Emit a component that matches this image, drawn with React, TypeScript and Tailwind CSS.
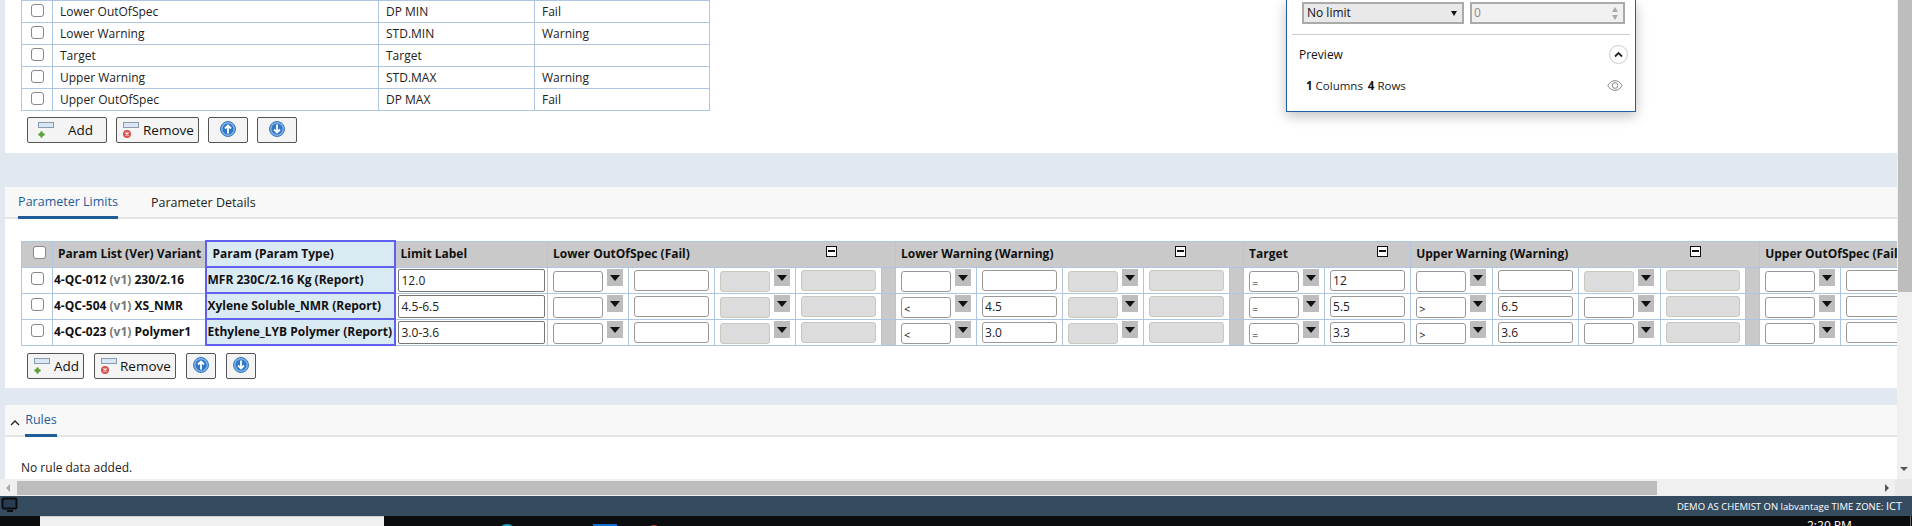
import React from "react";

function Bar() {
  return <rect x="0.5" y="0.5" width="15" height="5" fill="#dbe6f4" stroke="#8a9bb0" />;
}
function AddIcon() {
  return (
    <svg width="16" height="16" viewBox="0 0 16 16" className="shrink-0">
      <Bar />
      <path d="M3.500 9.500v6M0.500 12.500h6" stroke="#5a9e3a" strokeWidth="2.400" />
    </svg>
  );
}
function RemoveIcon() {
  return (
    <svg width="16" height="16" viewBox="0 0 16 16" className="shrink-0">
      <Bar />
      <circle cx="4" cy="12" r="4" fill="#d9534f" />
      <path d="M2.500 10.500l3 3M5.500 10.500l-3 3" stroke="#fff" strokeWidth="1.200" />
    </svg>
  );
}
function ArrowIcon({ up }: { up?: boolean }) {
  return (
    <svg width="16" height="16" viewBox="0 0 16 16" className="mb-[3px]">
      <circle cx="8" cy="8" r="7.500" fill="#7fb0e6" stroke="#3a78bd" />
      <circle cx="8" cy="8" r="5.500" fill="#2f78c9" />
      <path d={up ? "M8 12.500V4.500M5 7.500l3-3 3 3" : "M8 3.500v8M5 8.500l3 3 3-3"} stroke="#fff" strokeWidth="1.800" fill="none" />
    </svg>
  );
}

function Buttons({ top }: { top?: boolean }) {
  const base = "h-[26px] border border-[#555] rounded-[2px] bg-[#f4f4f4] flex items-center text-[13.500px] text-[#111]";
  const arrow = top ? "w-[40px] justify-center" : "w-[30px] justify-center";
  return (
    <div className={`flex ${top ? "gap-[9px]" : "gap-[10px]"}`}>
      <div className={`${base} ${top ? "w-[80px] pl-[10px] gap-[14px]" : "w-[57px] pl-[6px] gap-[4px]"}`}>
        <AddIcon />
        <span>Add</span>
      </div>
      <div className={`${base} ${top ? "w-[83px] pl-[6px] gap-[4px]" : "w-[82px] pl-[6px] gap-[3px]"}`}>
        <RemoveIcon />
        <span>Remove</span>
      </div>
      <div className={`${base} ${arrow}`}><ArrowIcon up /></div>
      <div className={`${base} ${arrow}`}><ArrowIcon /></div>
    </div>
  );
}

const topRows = [
  ["Lower OutOfSpec", "DP MIN", "Fail"],
  ["Lower Warning", "STD.MIN", "Warning"],
  ["Target", "Target", ""],
  ["Upper Warning", "STD.MAX", "Warning"],
  ["Upper OutOfSpec", "DP MAX", "Fail"],
];

function Check() {
  return <div className="w-[13px] h-[13px] border border-[#888] rounded-[3px] bg-white mx-auto mb-[3px]" />;
}

function Sel({ v, off }: { v?: string; off?: boolean }) {
  return (
    <div className="flex items-start h-[25px] pl-[5px]">
      <div className={`w-[50px] h-[21px] mt-[3px] shrink-0 border rounded-[3px] text-[11px] leading-[21px] pl-[2px] text-[#111] ${off ? "bg-[#dcdcdc] border-[#c8c8c0]" : "bg-white border-[#999]"}`}>{v}</div>
      <div className="w-[16px] h-[17px] mt-[1px] ml-[4px] shrink-0 bg-[#bdbdbd] flex justify-center pt-[6px]">
        <div className="w-0 h-0 border-l-[5px] border-r-[5px] border-t-[6px] border-l-transparent border-r-transparent border-t-[#111]" />
      </div>
    </div>
  );
}
function Inp({ v, off }: { v?: string; off?: boolean }) {
  return (
    <div className="px-[5px]">
      <div className={`h-[21px] border rounded-[3px] text-[12px] leading-[20px] px-[2px] text-[#222] ${off ? "bg-[#dcdcdc] border-[#c8c8c0]" : "bg-white border-[#999]"}`}>{v}</div>
    </div>
  );
}

type Row = {
  list: string; ver: string; variant: string; param: string; label: string;
  lw: [string, string]; t: [string, string]; uw: [string, string]; uwOff: boolean;
};
const rows: Row[] = [
  { list: "4-QC-012", ver: "(v1)", variant: "230/2.16", param: "MFR 230C/2.16 Kg (Report)", label: "12.0", lw: ["", ""], t: ["=", "12"], uw: ["", ""], uwOff: true },
  { list: "4-QC-504", ver: "(v1)", variant: "XS_NMR", param: "Xylene Soluble_NMR (Report)", label: "4.5-6.5", lw: ["<", "4.5"], t: ["=", "5.5"], uw: [">", "6.5"], uwOff: false },
  { list: "4-QC-023", ver: "(v1)", variant: "Polymer1", param: "Ethylene_LYB Polymer (Report)", label: "3.0-3.6", lw: ["<", "3.0"], t: ["=", "3.3"], uw: [">", "3.6"], uwOff: false },
];

const cell = "border border-[#aec6e4] p-0";
const hcell = "border border-[#aec6e4] p-0 pl-[5px] text-left align-middle font-bold text-[12px] text-[#111] relative whitespace-nowrap overflow-hidden";
const gapCell = "bg-[#c9c9c9] border-y border-[#aec6e4] p-0";
const hi = "!border-2 !border-[#6060f0] bg-[#daeaf3]";

function Minus({ right }: { right: string }) {
  return (
    <div className={`absolute ${right} top-[4px] w-[11px] h-[11px] border border-[#111] bg-white flex items-center justify-center`}>
      <div className="w-[7px] h-[2px] bg-[#111]" />
    </div>
  );
}

export default function App() {
  return (
    <div className="h-[526px] w-[1912px] overflow-hidden flex flex-col bg-[#e2e8f0] text-[12px] text-[#222]" style={{ fontFamily: '"Open Sans", "Noto Sans", sans-serif' }}>
      <div className="flex h-[479px] shrink-0">
        <div className="w-[1897px] shrink-0 pl-[5px] flex flex-col relative overflow-hidden">
          {/* top panel */}
          <div className="h-[153px] shrink-0 bg-white pl-[16px]">
            <table className="table-fixed border-collapse w-[689px]">
              <colgroup><col className="w-[31px]" /><col className="w-[326px]" /><col className="w-[156px]" /><col /></colgroup>
              <tbody>
                {topRows.map((r) => (
                  <tr key={r[0]} className="h-[22px]">
                    <td className={cell}><Check /></td>
                    <td className={`${cell} pl-[7px]`}>{r[0]}</td>
                    <td className={`${cell} pl-[7px]`}>{r[1]}</td>
                    <td className={`${cell} pl-[7px]`}>{r[2]}</td>
                  </tr>
                ))}
              </tbody>
            </table>
            <div className="ml-[6px] mt-[6px]"><Buttons top /></div>
          </div>
          {/* popup */}
          <div className="absolute left-[1286px] top-0 w-[350px] h-[112px] bg-white border border-t-0 border-[#1f5fa8] shadow-[0_4px_12px_rgba(0,0,0,0.25)] text-[#222]">
            <div className="flex gap-[6px] ml-[15px] mt-[2px]">
              <div className="w-[162px] h-[22px] border-2 border-[#aaa] bg-[#e9e9e9] flex items-center justify-between pl-[3px] pr-[5px] text-[#111]">
                <span>No limit</span>
                <div className="w-0 h-0 border-l-[3.500px] border-r-[3.500px] border-t-[5px] border-l-transparent border-r-transparent border-t-[#111]" />
              </div>
              <div className="w-[155px] h-[22px] border-2 border-[#aaa] bg-[#f0f0f0] flex items-center justify-between pl-[2px] pr-[5px] text-[#888]">
                <span>0</span>
                <div className="flex flex-col gap-[3px]">
                  <div className="w-0 h-0 border-l-[3.500px] border-r-[3.500px] border-b-[5px] border-l-transparent border-r-transparent border-b-[#aaa]" />
                  <div className="w-0 h-0 border-l-[3.500px] border-r-[3.500px] border-t-[5px] border-l-transparent border-r-transparent border-t-[#aaa]" />
                </div>
              </div>
            </div>
            <div className="h-px bg-[#ccc] mx-[5px] mt-[10px]" />
            <div className="flex items-center justify-between pl-[12px] pr-[7px] mt-[10px] h-[19px]">
              <span className="text-[#111]">Preview</span>
              <div className="w-[19px] h-[19px] rounded-full border border-[#ccc] flex items-center justify-center">
                <svg width="9" height="7" viewBox="0 0 9 7"><path d="M1 5.500l3.500-3.500L8 5.500" stroke="#222" strokeWidth="1.800" fill="none" /></svg>
              </div>
            </div>
            <div className="flex items-center justify-between pl-[19px] pr-[12px] mt-[13px] text-[11.500px]">
              <span><b className="text-[#111]">1</b> Columns <b className="ml-[2px] text-[#111]">4</b> Rows</span>
              <svg width="16" height="11" viewBox="0 0 16 11" fill="none" stroke="#888"><path d="M.8 5.500C3 2 5.300.7 8 .7s5 1.300 7.200 4.800C13 9 10.700 10.300 8 10.300S3 9 .8 5.500z" /><circle cx="8" cy="5.500" r="2.800" /></svg>
            </div>
          </div>
          {/* gap */}
          <div className="h-[34px] shrink-0" />
          {/* params panel */}
          <div className="h-[201px] shrink-0 bg-white overflow-hidden">
            <div className="h-[32px] bg-[#f8f8f8] border-b-2 border-[#e5e5e5] flex text-[12.500px] pl-[13px]">
              <div className="w-[100px] h-[32px] border-b-[3px] border-[#1f5c99] text-[#1f5c99] pt-[6px] text-center whitespace-nowrap">Parameter Limits</div>
              <div className="ml-[33px] pt-[7px] text-[#222] whitespace-nowrap">Parameter Details</div>
            </div>
            <table className="table-fixed border-collapse w-[1905px] mt-[21px] ml-[16px]">
              <colgroup>
                {[31,153,189,153,81,86,81,86,14,81,86,81,86,14,81,86,82,86,82,85,14,81,86].map((w, i) => <col key={i} style={{ width: w }} />)}
              </colgroup>
              <thead>
                <tr className="h-[26px] bg-[#c9c9c9]">
                  <th className={hcell}><Check /></th>
                  <th className={hcell}>Param List (Ver) Variant</th>
                  <th className={`${hcell} ${hi} !pl-[6px]`}>Param (Param Type)</th>
                  <th className={hcell}>Limit Label</th>
                  <th className={hcell} colSpan={5}>Lower OutOfSpec (Fail)<Minus right="right-[58px]" /></th>
                  <th className={hcell} colSpan={5}>Lower Warning (Warning)<Minus right="right-[57px]" /></th>
                  <th className={hcell} colSpan={2}>Target<Minus right="right-[22px]" /></th>
                  <th className={hcell} colSpan={5}>Upper Warning (Warning)<Minus right="right-[58px]" /></th>
                  <th className={hcell} colSpan={2}>Upper OutOfSpec (Fail)</th>
                </tr>
              </thead>
              <tbody>
                {rows.map((r) => (
                  <tr key={r.list} className="h-[26px]">
                    <td className={cell}><Check /></td>
                    <td className={`${cell} pl-[1px] font-bold text-[#111] whitespace-nowrap`}>{r.list} <span className="text-[#777]">{r.ver}</span> {r.variant}</td>
                    <td className={`${cell} ${hi} pl-[1px] font-bold text-[#111] whitespace-nowrap`}>{r.param}</td>
                    <td className={cell}><div className="px-[2px]"><div className="h-[23px] border border-[#777] rounded-[2px] bg-white pl-[3px] leading-[21px]">{r.label}</div></div></td>
                    <td className={cell}><Sel /></td>
                    <td className={cell}><Inp /></td>
                    <td className={cell}><Sel off /></td>
                    <td className={cell}><Inp off /></td>
                    <td className={gapCell}></td>
                    <td className={cell}><Sel v={r.lw[0]} /></td>
                    <td className={cell}><Inp v={r.lw[1]} /></td>
                    <td className={cell}><Sel off /></td>
                    <td className={cell}><Inp off /></td>
                    <td className={gapCell}></td>
                    <td className={cell}><Sel v={r.t[0]} /></td>
                    <td className={cell}><Inp v={r.t[1]} /></td>
                    <td className={cell}><Sel v={r.uw[0]} /></td>
                    <td className={cell}><Inp v={r.uw[1]} /></td>
                    <td className={cell}><Sel off={r.uwOff} /></td>
                    <td className={cell}><Inp off /></td>
                    <td className={gapCell}></td>
                    <td className={cell}><Sel /></td>
                    <td className={cell}><Inp /></td>
                  </tr>
                ))}
              </tbody>
            </table>
            <div className="ml-[22px] mt-[7px]"><Buttons /></div>
          </div>
          {/* gap */}
          <div className="h-[17px] shrink-0" />
          {/* rules */}
          <div className="h-[74px] shrink-0 bg-white">
            <div className="h-[32px] bg-[#f8f8f8] border-b-2 border-[#e5e5e5] flex pl-[5px]">
              <svg width="10" height="7" viewBox="0 0 10 7" className="mt-[14px] mr-[5px]"><path d="M1 6l4-4 4 4" stroke="#222" strokeWidth="1.300" fill="none" /></svg>
              <div className="h-[32px] w-[32px] border-b-[3px] border-[#1f5c99] text-[#1f5c99] pt-[6px] text-center text-[12.500px]">Rules</div>
            </div>
            <div className="pl-[16px] pt-[22px] text-[#222]">No rule data added.</div>
          </div>
        </div>
        {/* vertical scrollbar */}
        <div className="w-[15px] shrink-0 bg-[#f0f0f0] pl-px flex flex-col">
          <div className="h-[292px] bg-[#bdbdbd]" />
          <div className="w-0 h-0 ml-[2px] mt-[175px] border-l-[4px] border-r-[4px] border-t-[4px] border-l-transparent border-r-transparent border-t-[#555]" />
        </div>
      </div>
      {/* horizontal scrollbar */}
      <div className="h-[17px] shrink-0 bg-[#f0f0f0] flex items-center">
        <div className="w-0 h-0 ml-[6px] border-y-[4px] border-r-[4px] border-y-transparent border-r-[#aaa]" />
        <div className="ml-[7px] w-[1640px] h-[14px] bg-[#bdbdbd]" />
        <div className="w-0 h-0 ml-[228px] border-y-[4px] border-l-[4px] border-y-transparent border-l-[#555]" />
        <div className="ml-auto w-[17px] h-[17px] bg-[#e8e8e8]" />
      </div>
      {/* status bar */}
      <div className="h-[20px] shrink-0 bg-[#354b60] flex items-center justify-between pr-[10px] text-[9.500px] text-white">
        <svg width="18" height="18" viewBox="0 0 18 18" className="ml-px"><rect x="1.500" y="1.500" width="14" height="10" rx="1.500" fill="#2a3d50" stroke="#0b0c0e" strokeWidth="2" /><path d="M6 13h6v2H6z" fill="#0b0c0e" /></svg>
        <span>DEMO AS CHEMIST ON labvantage TIME ZONE: <span className="text-[11px]">ICT</span></span>
      </div>
      {/* task bar */}
      <div className="h-[10px] shrink-0 bg-[#0b0c0e] relative overflow-hidden">
        <div className="ml-[40px] w-[344px] h-[10px] bg-[#f0f0f0] border-t border-[#ccc]" />
        <div className="absolute left-[498px] top-[8px] w-[18px] h-[18px] rounded-full bg-[#1aa5b8]" />
        <div className="absolute left-[593px] top-[8px] w-[24px] h-[18px] bg-[#0e6fd0]" />
        <div className="absolute left-[647px] top-[9px] w-[14px] h-[14px] rounded-full bg-[#c8453a]" />
        <div className="absolute left-[1807px] top-[2px] text-[12px] leading-[16px] text-white">2:20 PM</div>
        <div className="absolute left-[1910px] top-0 w-px h-[10px] bg-[#666]" />
      </div>
    </div>
  );
}
